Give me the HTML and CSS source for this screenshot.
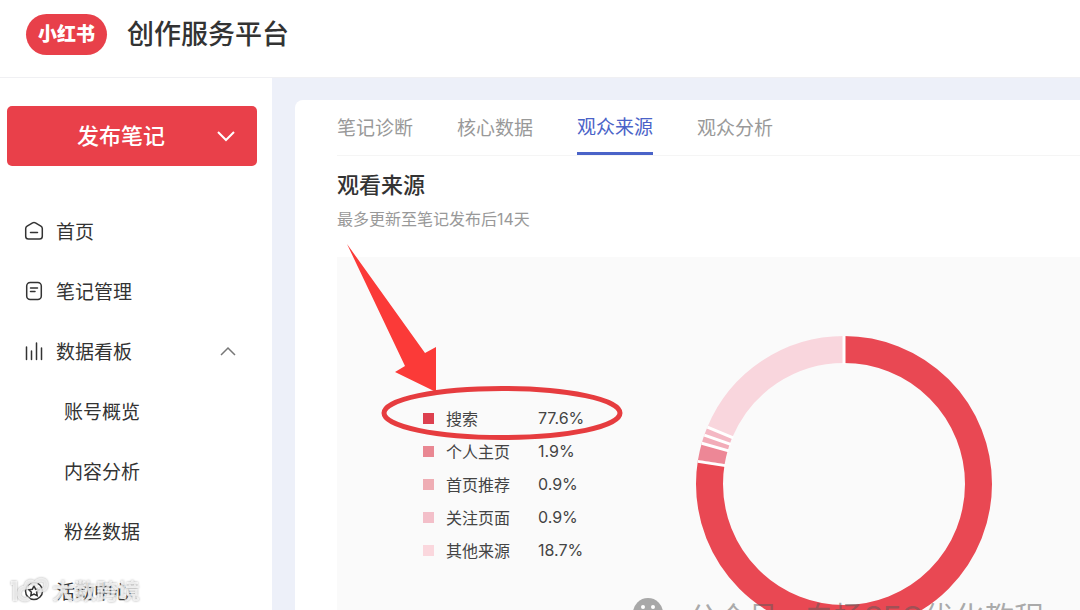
FILE: index.html
```
<!DOCTYPE html>
<html lang="zh-CN">
<head>
  <meta charset="UTF-8" />
  <meta name="viewport" content="width=device-width, initial-scale=1.0" />
  <title>创作服务平台</title>
  <link rel="stylesheet" href="styles.css">
</head>
<body>
  <header class="header">
    <span class="logo">小红书</span>
    <h1>创作服务平台</h1>
  </header>

  <div class="layout">
    <aside class="sidebar">
      <button class="publish" type="button">
        <span>发布笔记</span>
        <svg width="20" height="12" viewBox="0 0 20 12"><path d="M2 2l8 8 8-8" /></svg>
      </button>
      <nav class="menu">
        <a href="#home">
          <svg class="icon" viewBox="0 0 20 20"><path d="M8.600 1.900Q10 1.100 11.400 1.900L16.900 5.100Q18.300 6 18.300 7.500V15.200Q18.300 18 15.500 18H4.500Q1.700 18 1.700 15.200V7.500Q1.700 6 3.100 5.100Z" /><path d="M6.500 11.500h7" /></svg>
          首页
        </a>
        <a href="#notes">
          <svg class="icon" viewBox="0 0 20 20"><rect x="2.700" y="1.500" width="14.600" height="17" rx="3.500" /><path d="M6.500 7h7M6.500 10.500h4.500" /></svg>
          笔记管理
        </a>
        <a href="#data">
          <svg class="icon" viewBox="0 0 20 20"><path d="M2.500 6v12.500M7.500 10v8.500M12.500 2v16.500M17.500 7v11.500" /></svg>
          数据看板
          <svg class="arrow" width="16" height="10" viewBox="0 0 16 10"><path d="M1 9l7-7 7 7" /></svg>
        </a>
        <a class="sub" href="#account">账号概览</a>
        <a class="sub" href="#content">内容分析</a>
        <a class="sub" href="#fans">粉丝数据</a>
        <a href="#events">
          <svg class="icon" viewBox="0 0 20 20"><circle cx="10" cy="10" r="8.500" /><path d="M10 5l1.600 3.200 3.500.5-2.500 2.500.6 3.500-3.200-1.700-3.200 1.700.6-3.500-2.500-2.500 3.500-.5z" /></svg>
          活动中心
        </a>
      </nav>
    </aside>

    <main class="main">
      <section class="card">
        <nav class="tabs">
          <a href="#diagnosis">笔记诊断</a>
          <a href="#core">核心数据</a>
          <a class="active" href="#source">观众来源</a>
          <a href="#analysis">观众分析</a>
        </nav>
        <h2>观看来源</h2>
        <p class="tip">最多更新至笔记发布后14天</p>

        <div class="chart">
          <table class="legend">
            <tr><td><i class="c1"></i></td><th scope="row">搜索</th><td>77.6%</td></tr>
            <tr><td><i class="c2"></i></td><th scope="row">个人主页</th><td>1.9%</td></tr>
            <tr><td><i class="c3"></i></td><th scope="row">首页推荐</th><td>0.9%</td></tr>
            <tr><td><i class="c4"></i></td><th scope="row">关注页面</th><td>0.9%</td></tr>
            <tr><td><i class="c5"></i></td><th scope="row">其他来源</th><td>18.7%</td></tr>
          </table>
          <svg class="donut" width="296" height="296" viewBox="0 0 296 296">
            <g transform="rotate(-90 148 148)">
              <circle class="s1" cx="148" cy="148" r="134.500" pathLength="1000" stroke-dasharray="776 224" />
              <circle class="s2" cx="148" cy="148" r="134.500" pathLength="1000" stroke-dasharray="19 981" stroke-dashoffset="-776" />
              <circle class="s3" cx="148" cy="148" r="134.500" pathLength="1000" stroke-dasharray="9 991" stroke-dashoffset="-795" />
              <circle class="s4" cx="148" cy="148" r="134.500" pathLength="1000" stroke-dasharray="9 991" stroke-dashoffset="-804" />
              <circle class="s5" cx="148" cy="148" r="134.500" pathLength="1000" stroke-dasharray="187 813" stroke-dashoffset="-813" />
            </g>
            <!-- white gaps between slices -->
            <g class="gaps">
              <path d="M148 0v28" />
              <path d="M148 0v28" transform="rotate(278.800 148 148)" />
              <path d="M148 0v28" transform="rotate(286 148 148)" />
              <path d="M148 0v28" transform="rotate(289.300 148 148)" />
              <path d="M148 0v28" transform="rotate(292.600 148 148)" />
            </g>
          </svg>
          <svg class="mark" width="300" height="210" viewBox="340 240 300 210">
            <path d="M347 244L425 353L436 347V392L395 372L405 366Z" />
            <ellipse cx="502" cy="413" rx="118" ry="24.500" />
          </svg>
        </div>
      </section>
    </main>
  </div>

  <div class="watermark-left">
    <svg width="42" height="30" viewBox="0 0 42 30">
      <path d="M2 7h4v18M18 12a6 6 0 1 0 2 10M17 13c-1-8 7-10 9-4c1-7 12-7 11 0c0 5-6 7-9 4" />
    </svg>
    <span>大数跨境</span>
  </div>

  <div class="watermark-right">
    <svg width="30" height="30" viewBox="0 0 30 30">
      <circle cx="15" cy="15" r="15" />
      <circle class="eye" cx="10" cy="9" r="2" />
      <circle class="eye" cx="20" cy="9" r="2" />
    </svg>
    <span>公众号 · 白杨SEO优化教程</span>
  </div>
</body>
</html>
```

FILE: styles.css
```
* {
  box-sizing: border-box;
}
body {
  margin: 0;
  height: 100vh;
  overflow: hidden;
  position: relative;
  display: flex;
  flex-direction: column;
  font-family: Inter, "Noto Sans CJK SC", sans-serif;
  color: #333;
  background-color: #fff;
}
a {
  color: inherit;
  text-decoration: none;
}
svg {
  fill: none;
  flex: none;
}
.header {
  display: flex;
  align-items: center;
  flex: none;
  gap: 20px;
  height: 78px;
  padding: 0 26px 9px;
  border-bottom: 1px solid #f0f0f3;
}
.logo {
  width: 81px;
  height: 41px;
  border-radius: 21px;
  background-color: #e8404a;
  color: #fff;
  font-size: 19px;
  font-weight: 900;
  line-height: 42px;
  text-align: center;
}
h1 {
  margin: 0;
  padding-top: 2px;
  font-size: 27px;
  font-weight: 500;
  line-height: 42px;
}
.layout {
  display: flex;
  flex: 1;
  min-height: 0;
}
.sidebar {
  flex: none;
  width: 272px;
  padding: 28px 15px 0 7px;
}
.publish {
  display: flex;
  align-items: center;
  justify-content: flex-end;
  gap: 51px;
  width: 100%;
  height: 60px;
  padding: 0 21px;
  border: none;
  border-radius: 5px;
  background-color: #e9404a;
  color: #fff;
  font-family: inherit;
  font-size: 22px;
  font-weight: 500;
  cursor: pointer;
}
.publish span {
  padding-bottom: 4px;
}
.publish svg {
  stroke: #fff;
  stroke-width: 2;
}
.menu {
  padding: 34px 21px 0 17px;
  font-size: 19px;
}
.menu a {
  display: flex;
  align-items: center;
  gap: 12px;
  height: 60px;
}
.menu .sub {
  padding-left: 40px;
}
.icon {
  width: 20px;
  height: 20px;
  margin-top: 2px;
  stroke: #333;
  stroke-width: 1.5;
  stroke-linecap: round;
}
.arrow {
  margin-top: 2px;
  margin-left: auto;
  stroke: #777;
  stroke-width: 1.5;
}
.main {
  flex: 1;
  min-width: 0;
  padding: 22px 0 0 23px;
  background-color: #edf0f9;
}
.card {
  padding-left: 42px;
  border-radius: 8px 0 0 0;
  background-color: #fff;
}
.tabs {
  display: flex;
  gap: 44px;
  height: 56px;
  border-bottom: 1px solid #f5f5f5;
  color: #999;
  font-size: 19px;
  line-height: 58px;
}
.tabs a {
  height: 55px;
}
.tabs .active {
  color: #4a63c8;
  line-height: 56px;
  border-bottom: 3px solid #4a63c8;
}
h2 {
  margin: 0;
  padding-top: 13px;
  font-size: 22px;
  font-weight: 500;
  line-height: 32px;
}
.tip {
  margin: 0;
  padding: 6px 0 26px;
  color: #999;
  font-size: 16px;
  line-height: 24px;
}
.chart {
  position: relative;
  display: flex;
  align-items: center;
  gap: 102px;
  padding: 79px 0 79px 86px;
  background-color: #fafafa;
}
.legend {
  border-collapse: collapse;
  color: #444;
  font-size: 16px;
}
.legend tr {
  height: 33px;
}
.legend td,
.legend th {
  width: 56px;
  padding: 0;
  font-weight: 400;
  text-align: left;
}
.legend td:first-child {
  width: 23px;
}
.legend th {
  width: 92px;
}
.legend i {
  display: block;
  width: 11px;
  height: 11px;
}
.c1 { background-color: #dd404f; }
.c2 { background-color: #e98792; }
.c3 { background-color: #efadb4; }
.c4 { background-color: #f3bfc9; }
.c5 { background-color: #fad7dd; }
.donut circle {
  stroke-width: 27;
}
.s1 { stroke: #e94853; }
.s2 { stroke: #ed8796; }
.s3 { stroke: #f2acb8; }
.s4 { stroke: #f4b8c4; }
.s5 { stroke: #f9d6dd; }
.gaps {
  stroke: #fff;
  stroke-width: 3;
}
/* arrow and ring drawn over the chart */
.mark {
  position: absolute;
  left: 3px;
  top: -17px;
}
.mark path {
  fill: #fb3a38;
}
.mark ellipse {
  stroke: #e63c3f;
  stroke-width: 5;
}
.watermark-left {
  position: absolute;
  left: 9px;
  bottom: 4px;
  display: flex;
  align-items: center;
  gap: 1px;
  color: rgba(255, 255, 255, 0.7);
  font-size: 22px;
  font-weight: 700;
  line-height: 30px;
  filter: drop-shadow(0 0 1px #888);
}
.watermark-left svg {
  stroke: rgba(255, 255, 255, 0.7);
  stroke-width: 4;
}
.watermark-right {
  position: absolute;
  right: 36px;
  bottom: -29px;
  display: flex;
  align-items: flex-start;
  gap: 25px;
  color: rgba(90, 90, 90, 0.5);
  font-size: 30px;
  line-height: 44px;
}
.watermark-right svg {
  margin-top: 3px;
  fill: #a8a8a8;
}
.watermark-right .eye {
  fill: #fff;
}
```
